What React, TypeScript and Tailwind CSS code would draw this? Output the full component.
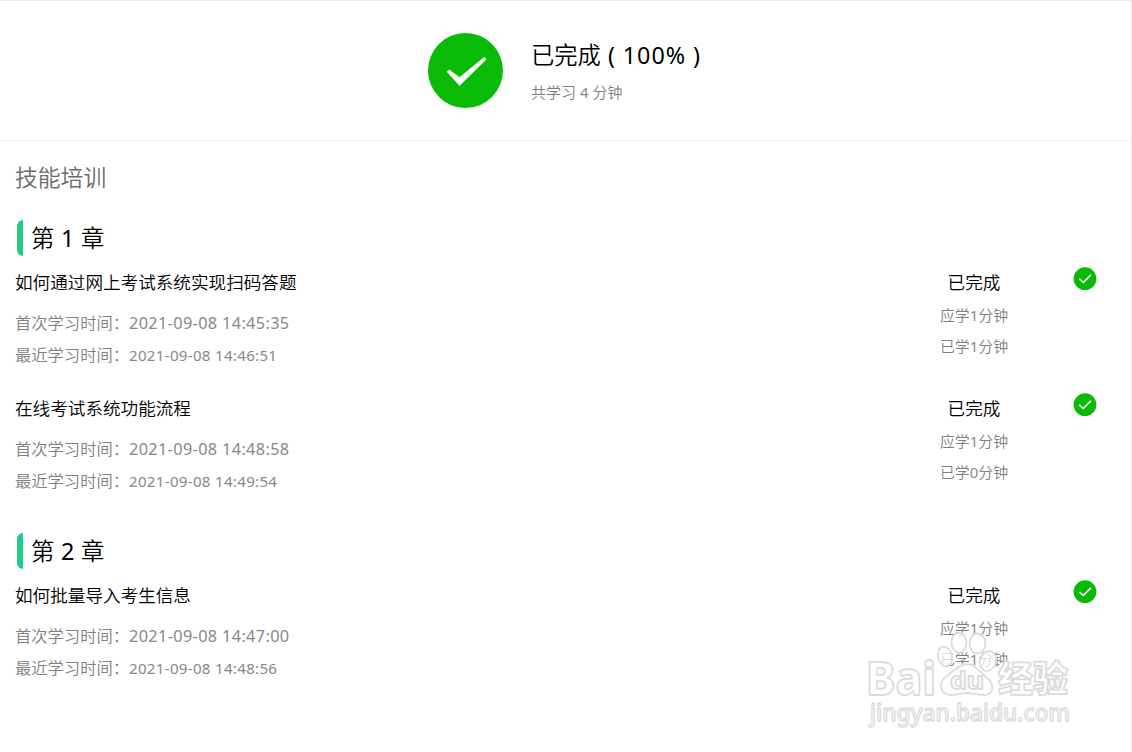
import React from 'react';

interface Lesson {
  title: string;
  firstTime: string;
  lastTime: string;
  required: number;
  learned: number;
}

interface Chapter {
  no: number;
  lessons: Lesson[];
}

const chapters: Chapter[] = [
  {
    no: 1,
    lessons: [
      {
        title: '如何通过网上考试系统实现扫码答题',
        firstTime: '2021-09-08 14:45:35',
        lastTime: '2021-09-08 14:46:51',
        required: 1,
        learned: 1,
      },
      {
        title: '在线考试系统功能流程',
        firstTime: '2021-09-08 14:48:58',
        lastTime: '2021-09-08 14:49:54',
        required: 1,
        learned: 0,
      },
    ],
  },
  {
    no: 2,
    lessons: [
      {
        title: '如何批量导入考生信息',
        firstTime: '2021-09-08 14:47:00',
        lastTime: '2021-09-08 14:48:56',
        required: 1,
        learned: 1,
      },
    ],
  },
];

function DoneIcon({ className }: { className: string }) {
  return (
    <svg viewBox="0 0 75 75" className={className}>
      <circle cx="37.5" cy="37.5" r="37.5" fill="#09bb07" />
      <path
        d="M19.2 38.8 L21.2 37 L31.6 44.6 L56.2 24.4 L58.2 26.2 L31.6 52.4 Z"
        fill="#fff"
        stroke="#fff"
        strokeWidth="0.8"
        strokeLinejoin="round"
      />
    </svg>
  );
}

function SmallDoneIcon() {
  return (
    <svg viewBox="0 0 24 24" className="w-6 h-6">
      <circle cx="12" cy="11.7" r="11.4" fill="#09bb07" />
      <path d="M6.4 11.9 L10.3 15.5 L17.9 7.9" fill="none" stroke="#fff" strokeWidth="1.6" />
    </svg>
  );
}

function LessonRow({ lesson }: { lesson: Lesson }) {
  return (
    <div className="flex h-[126px]">
      <div className="flex-1 pl-[15px] pt-2">
        <h3 className="h-9 leading-9 text-[17.6px] text-black">{lesson.title}</h3>
        <p className="flex mt-[7px] h-8 leading-8 text-[16.3px] text-[#808080]">
          <span>首次学习时间：</span>
          <span className="font-normal text-[#888] text-[16.3px] tracking-[0.35px]">{lesson.firstTime}</span>
        </p>
        <p className="flex h-8 leading-8 text-[16.3px] text-[#808080]">
          <span>最近学习时间：</span>
          <span className="font-normal text-[#888] text-[15.1px] tracking-[0.3px]">{lesson.lastTime}</span>
        </p>
      </div>
      <div className="w-[140px] pt-2 text-center">
        <p className="h-9 leading-9 text-[17.6px] text-black">已完成</p>
        <p className="h-[31px] leading-[31px] text-[14.9px] text-[#808080]">
          应学<span className="font-normal text-[#888]">{lesson.required}</span>分钟
        </p>
        <p className="h-[31px] leading-[31px] text-[14.9px] text-[#808080]">
          已学<span className="font-normal text-[#888]">{lesson.learned}</span>分钟
        </p>
      </div>
      <div className="w-[82px] pt-[11px] mr-[5px] flex justify-center items-start">
        <SmallDoneIcon />
      </div>
    </div>
  );
}

function Watermark() {
  return (
    <svg
      viewBox="0 0 212 104"
      className="absolute left-[864px] top-[626px] w-[212px] h-[104px]"
      fill="#fff"
      fillOpacity="0.7"
      stroke="#dcdcdc"
      strokeWidth="1.8"
      strokeLinejoin="round"
    >
      <ellipse cx="95" cy="15.5" rx="7.5" ry="10" />
      <ellipse cx="113.5" cy="16.5" rx="8" ry="10" />
      <ellipse cx="81" cy="29.5" rx="7" ry="10" transform="rotate(-12 81 29.5)" />
      <ellipse cx="124" cy="34" rx="8" ry="10" transform="rotate(20 124 34)" />
      <path d="M103 37 C111 37 115 44 121 49 C131 56 131 68 119 68 C112 68 108 66 103 66 C97 66 94 68 87 68 C75 68 74 54 83 49 C90 44 95 37 103 37 Z" />
      <g className="font-bold" fontFamily="Noto Sans">
        <text x="2" y="68" fontSize="47" textLength="70" lengthAdjust="spacingAndGlyphs" className="font-extrabold">Bai</text>
        <text x="86" y="62" fontSize="24" textLength="34" lengthAdjust="spacingAndGlyphs">du</text>
      </g>
      <text x="134" y="65" fontSize="36" textLength="70" lengthAdjust="spacingAndGlyphs" className="font-black" fontFamily="Noto Sans CJK SC">经验</text>
      <text x="6" y="94" fontSize="23" strokeWidth="1.4" textLength="200" lengthAdjust="spacingAndGlyphs" className="font-medium" fontFamily="Noto Sans">jingyan.baidu.com</text>
    </svg>
  );
}

export default function App() {
  return (
    <div className="relative w-[1132px] h-[752px] overflow-hidden bg-white border-t border-r border-[#ececec] font-[350] font-['Noto_Sans','Noto_Sans_CJK_SC',sans-serif]">
      <header className="flex h-[140px] border-b border-[#f2f2f2] pl-[428px]">
        <DoneIcon className="w-[75px] h-[75px] mt-8" />
        <div className="pl-7 pt-9">
          <h1 className="flex h-9 leading-9 text-[23.3px] text-black">
            <span>已完成</span>
            <span className="whitespace-pre font-normal tracking-[0.95px]">{' ( 100% )'}</span>
          </h1>
          <p className="h-9 mt-px leading-9 text-[15px] text-[#808080]">
            共学习 <span className="font-normal text-[#888]">4</span> 分钟
          </p>
        </div>
      </header>

      <h2 className="pl-[15px] mt-[19px] h-9 leading-9 text-[22.8px] text-[#6c6c6c]">技能培训</h2>

      <main className="pt-6">
        {chapters.map((chapter) => (
          <section key={chapter.no} className="mb-[25px]">
            <div className="ml-[17px] h-9 pl-2 border-l-[6px] border-[#22cc88] rounded-l-[6px]">
              <h2 className="leading-9 text-[23.4px] tracking-[0.25px] text-black">
                第 <span className="font-normal">{chapter.no}</span> 章
              </h2>
            </div>
            {chapter.lessons.map((lesson) => (
              <LessonRow key={lesson.title} lesson={lesson} />
            ))}
          </section>
        ))}
      </main>

      <Watermark />
    </div>
  );
}
